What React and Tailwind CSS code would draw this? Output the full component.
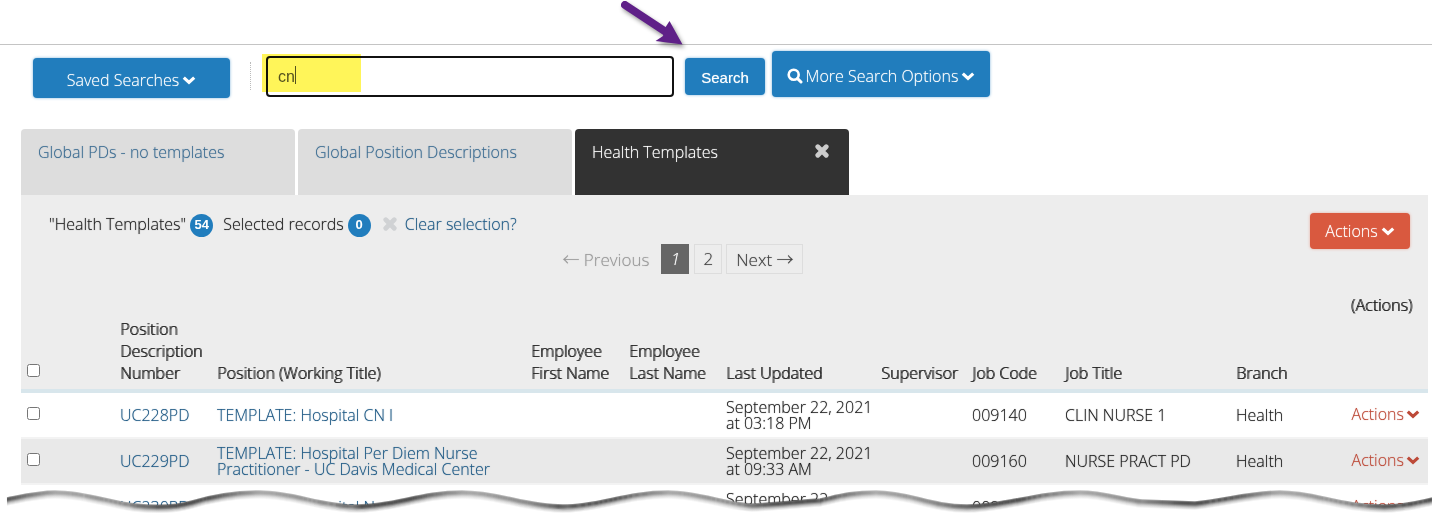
import { useState } from 'react';

const tabs = ['Global PDs - no templates', 'Global Position Descriptions', 'Health Templates'];

const rows = [
  {
    number: 'UC228PD',
    title: 'TEMPLATE: Hospital CN I',
    updated: 'September 22, 2021 at 03:18 PM',
    code: '009140',
    job: 'CLIN NURSE 1',
    branch: 'Health',
  },
  {
    number: 'UC229PD',
    title: 'TEMPLATE: Hospital Per Diem Nurse Practitioner - UC Davis Medical Center',
    updated: 'September 22, 2021 at 09:33 AM',
    code: '009160',
    job: 'NURSE PRACT PD',
    branch: 'Health',
  },
  {
    number: 'UC230PD',
    title: 'TEMPLATE: Hospital N',
    updated: 'September 22,',
    code: '009139',
    job: '',
    branch: '',
  },
];

const Chevron = () => (
  <svg viewBox="0 0 14 10" className="h-[10px] w-[14px] shrink-0" aria-hidden="true">
    <path d="M1.8 2.6 7 7.4l5.2-4.8" fill="none" stroke="currentColor" strokeWidth="3.2" />
  </svg>
);

const Cross = ({ className }) => (
  <svg viewBox="0 0 14 14" className={className} aria-hidden="true">
    <path d="M2.8 2.8l8.4 8.4M11.2 2.8l-8.4 8.4" fill="none" stroke="currentColor" strokeWidth="4.8" strokeLinecap="round" />
  </svg>
);

const Magnifier = () => (
  <svg viewBox="0 0 16 16" className="h-4 w-4 shrink-0" aria-hidden="true">
    <circle cx="6.7" cy="6.7" r="5" fill="none" stroke="currentColor" strokeWidth="2.6" />
    <path d="M10.6 10.6l3.4 3.4" stroke="currentColor" strokeWidth="3" strokeLinecap="round" />
  </svg>
);

const Badge = ({ children }) => (
  <span className="ml-1 mt-0.5 flex h-[23px] w-[23px] items-center justify-center rounded-full bg-[#217dbd] font-['Liberation_Sans',sans-serif] text-[13px] font-bold text-white [text-shadow:none]">
    {children}
  </span>
);

const PurpleArrow = () => (
  <svg viewBox="0 0 70 56" className="absolute left-[618px] top-0 h-14 w-[70px] drop-shadow-[2px_3px_2px_rgba(0,0,0,0.4)]" aria-hidden="true">
    <path d="M7 5 48 32" stroke="#5f2088" strokeWidth="8" strokeLinecap="round" />
    <path d="M51.5 21 64.5 44.5 37.5 41 45 36 47 28z" fill="#5f2088" />
  </svg>
);

const EDGE =
  'M7 13 C22 10 38 6 55 6 C85 6 110 16 135 19 C155 21 175 21 192 16 C212 10 232 6 260 6 C295 6 320 20 357 20 C395 20 420 6 462 6 C500 6 525 20 563 20 C600 20 625 6 668 6 C700 6 725 18 752 19 C775 18 800 15 820 14 C838 10 850 6 876 6 C910 6 930 20 967 20 C1005 20 1035 6 1080 6 C1105 6 1125 14 1142 15 L1195 17 C1225 14 1250 6 1280 6 C1315 6 1340 20 1384 20 C1405 20 1418 16 1432 13';

const shadow = [
  [0, 0.6],
  [1, 0.75],
  [2, 0.75],
  [3, 0.6],
  [4, 0.4],
  [5, 0.25],
  [6, 0.15],
  [7, 0.08],
];

// wavy paper edge that cuts the table off at the bottom
const TornEdge = () => (
  <svg viewBox="0 0 1432 52" preserveAspectRatio="none" className="relative -mt-[46px] block h-[52px] w-full" aria-hidden="true">
    <defs>
      <linearGradient id="tear" gradientUnits="userSpaceOnUse" x1="60" x2="264" y1="0" y2="0" spreadMethod="repeat">
        <stop offset="0" stopColor="#999" />
        <stop offset="0.3" stopColor="#777" />
        <stop offset="0.5" stopColor="#333" />
        <stop offset="0.72" stopColor="#333" />
        <stop offset="0.9" stopColor="#777" />
        <stop offset="1" stopColor="#999" />
      </linearGradient>
    </defs>
    <path d={`${EDGE} V52 H0 V13z`} fill="#fff" />
    {shadow.map(([y, opacity]) => (
      <path key={y} d={EDGE} transform={`translate(0 ${y})`} fill="none" stroke="url(#tear)" strokeWidth="1.4" opacity={opacity} />
    ))}
  </svg>
);

const softText = '[text-shadow:0_0_1px_color-mix(in_srgb,currentColor_60%,transparent)]';
const heading = 'font-light leading-[22px] [text-shadow:1px_0_0_#444]';
const th = `px-2 pb-[5px] text-left align-bottom ${heading}`;
const td = 'pl-2 py-1.5 leading-4';
const blueButton = `rounded-[4px] bg-[#217dbd] text-white shadow-[0_0_3px_#7fb3da] ${softText}`;
const arrow = "font-['Noto_Sans_CJK_JP',sans-serif]";

export default function App() {
  const [query, setQuery] = useState('cn');
  const [selected, setSelected] = useState([]);

  const toggle = (number) => {
    setSelected(selected.includes(number) ? selected.filter((n) => n !== number) : [...selected, number]);
  };

  const toggleAll = () => {
    setSelected(selected.length === rows.length ? [] : rows.map((row) => row.number));
  };

  return (
    <div className={`relative overflow-hidden bg-white font-['Open_Sans',sans-serif] text-base font-light text-[#222] ${softText}`}>
      <header className="h-[45px] border-b border-[#c4c4c4]" />
      <PurpleArrow />

      <form className="flex h-[84px] items-start pl-[33px] pt-1.5" onSubmit={(e) => e.preventDefault()}>
        <button type="button" className={`mt-[7px] flex h-10 w-[197px] items-center justify-center gap-[3px] pt-1 ${blueButton}`}>
          Saved Searches <Chevron />
        </button>
        <div className="ml-5 mt-[11px] h-7 border-l border-dotted border-[#bbb]" />
        <div className="relative ml-[15px] mt-[5px] w-[408px]">
          <input
            type="text"
            aria-label="Search"
            value={query}
            onChange={(e) => setQuery(e.target.value)}
            className="block h-[41px] w-full rounded-[4px] border-2 border-[#111] px-2.5 font-['Liberation_Sans',sans-serif] text-base text-[#555] outline-none"
          />
          <span className="absolute left-[29px] top-2.5 h-[18px] w-px bg-[#555]" />
          <span className="pointer-events-none absolute -left-1 -top-0.5 h-[38px] w-[99px] bg-[#fff559] mix-blend-multiply" />
        </div>
        <button
          type="submit"
          className={`ml-[11px] mt-[7px] h-[37px] w-20 pt-1 font-['Liberation_Sans',sans-serif] text-[15px] font-normal ${blueButton}`}
        >
          Search
        </button>
        <button type="button" className={`ml-[7px] flex h-[46px] w-[218px] items-center justify-center gap-[3px] pt-1 ${blueButton}`}>
          <Magnifier /> More Search Options <Chevron />
        </button>
      </form>

      <main className="ml-[21px] mr-1">
        <nav className="flex gap-[3px]">
          {tabs.map((tab, idx) => {
            const active = idx === 2;
            return (
              <div
                key={tab}
                className={`flex h-[66px] w-[274px] items-start justify-between rounded-t-[4px] px-[17px] pt-[11px] ${
                  active ? 'bg-[#323232] text-white' : 'bg-[#ddd] text-[#3d6d92]'
                }`}
              >
                <a href="#">{tab}</a>
                {active && (
                  <button type="button" aria-label="Close tab" className="mr-[3px] mt-1 text-[#ccc]">
                    <Cross className="h-3.5 w-3.5" />
                  </button>
                )}
              </div>
            );
          })}
        </nav>

        <section className="bg-[#ededed]">
          <div className="flex items-start pr-[18px] pt-[18px]">
            <div className="flex-1">
              <div className="flex h-[22px] items-center pl-7">
                <span>"Health Templates"</span>
                <Badge>54</Badge>
                <span className="ml-2.5">Selected records</span>
                <Badge>{selected.length}</Badge>
                <Cross className="ml-3 h-3.5 w-3.5 text-[#d0d2d4]" />
                <a href="#" className="ml-2 text-[#1f5a85]">
                  Clear selection?
                </a>
              </div>
              <nav className="mt-[9px] flex h-[30px] items-stretch justify-center pl-6 text-[17px] leading-7 text-[#444]">
                <span className="px-2.5 pt-px text-[#999]">
                  <span className={arrow}>←</span> Previous
                </span>
                <em className="ml-0.5 w-7 border border-[#666] bg-[#666] text-center text-white">1</em>
                <a href="#" className="ml-[5px] w-7 border border-[#ddd] text-center">
                  2
                </a>
                <a href="#" className="ml-1 border border-[#ddd] pl-[9px] pr-2">
                  Next <span className={arrow}>→</span>
                </a>
              </nav>
            </div>
            <button
              type="button"
              className={`flex h-9 w-[100px] items-center justify-center gap-[3px] rounded-[4px] bg-[#d9593f] text-white shadow-[0_0_3px_#e8a99b] ${softText}`}
            >
              Actions <Chevron />
            </button>
          </div>

          <table className="mt-4 w-full table-fixed border-collapse">
            <colgroup>
              <col className="w-[91px]" />
              <col className="w-[97px]" />
              <col />
              <col className="w-[98px]" />
              <col className="w-[97px]" />
              <col className="w-[155px]" />
              <col className="w-[91px]" />
              <col className="w-[93px]" />
              <col className="w-[171px]" />
              <col className="w-[105px]" />
              <col className="w-[95px]" />
            </colgroup>
            <thead>
              <tr className="h-[101px] border-b-4 border-[#d8e6ec]">
                <th className="pb-3 pl-1.5 text-left align-bottom">
                  <input
                    type="checkbox"
                    aria-label="Select all"
                    className="block h-[13px] w-[13px]"
                    checked={selected.length === rows.length}
                    onChange={toggleAll}
                  />
                </th>
                <th className={th}>Position Description Number</th>
                <th className={th}>Position (Working Title)</th>
                <th className={th}>Employee First Name</th>
                <th className={th}>Employee Last Name</th>
                <th className={th}>Last Updated</th>
                <th className={th}>Supervisor</th>
                <th className={th}>Job Code</th>
                <th className={th}>Job Title</th>
                <th className={th}>Branch</th>
                <th className={`pr-4 pt-1 text-right align-top ${heading}`}>(Actions)</th>
              </tr>
            </thead>
            <tbody>
              {rows.map((row) => (
                <tr key={row.number} className="h-[46px] border-b-2 border-[#f3f3f3] bg-white even:bg-[#e9e9e9]">
                  <td className="pl-1.5 pb-1">
                    <input
                      type="checkbox"
                      aria-label={`Select ${row.number}`}
                      className="block h-[13px] w-[13px]"
                      checked={selected.includes(row.number)}
                      onChange={() => toggle(row.number)}
                    />
                  </td>
                  <td className={td}>
                    <a href="#" className="text-[#1f5a85]">{row.number}</a>
                  </td>
                  <td className={td}>
                    <a href="#" className="text-[#1f5a85]">{row.title}</a>
                  </td>
                  <td />
                  <td />
                  <td className={`${td} align-top`}>{row.updated}</td>
                  <td />
                  <td className={td}>{row.code}</td>
                  <td className={td}>{row.job}</td>
                  <td className={td}>{row.branch}</td>
                  <td className="pr-2 pb-0.5">
                    <button type="button" className={`ml-auto flex items-center gap-0.5 text-[#bd4a38] ${softText}`}>
                      Actions <Chevron />
                    </button>
                  </td>
                </tr>
              ))}
            </tbody>
          </table>
        </section>
      </main>
      <TornEdge />
    </div>
  );
}
